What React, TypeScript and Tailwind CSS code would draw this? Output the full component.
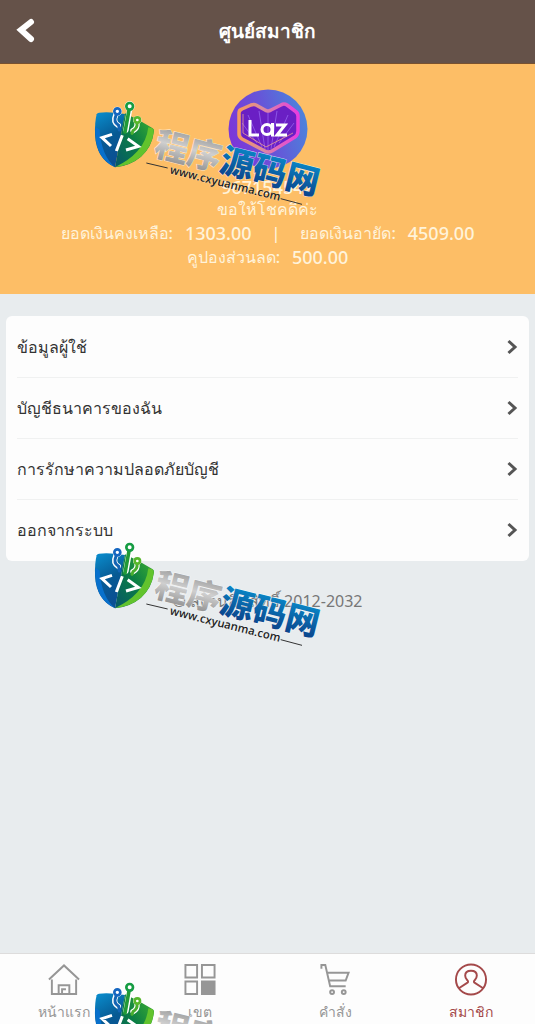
import { useId } from "react";

const menu = ["ข้อมูลผู้ใช้", "บัญชีธนาคารของฉัน", "การรักษาความปลอดภัยบัญชี", "ออกจากระบบ"];

function Chevron() {
  return (
    <svg viewBox="0 0 12 16" className="h-4 w-3" fill="none" stroke="#555" strokeWidth="3" aria-hidden="true">
      <path d="M2.500 2 9 8l-6.500 6" />
    </svg>
  );
}

function Avatar() {
  return (
    <svg viewBox="0 0 80 80" className="h-20 w-20" role="img" aria-label="Laz">
      <defs>
        <linearGradient id="disc" x1="0" y1="0.600" x2="1" y2="0.300">
          <stop offset="0" stopColor="#7d35d8" />
          <stop offset="0.500" stopColor="#6656d8" />
          <stop offset="1" stopColor="#4a86dc" />
        </linearGradient>
        <linearGradient id="heart" x1="0" y1="0" x2="1" y2="0">
          <stop offset="0" stopColor="#f79a5c" />
          <stop offset="0.400" stopColor="#d98aa0" />
          <stop offset="1" stopColor="#e93ce0" />
        </linearGradient>
      </defs>
      <circle cx="40" cy="40" r="39.500" fill="url(#disc)" />
      <path d="M12 19 27 15l13 7 16-7 14 10v22L40 62 14 50Z" fill="#6a1fc4" />
      <path d="M40 62V22M34 58 20 26M46 58l14-32M29 54 14 34M51 54l15-20M37 60l-6-38M43 60l6-38" stroke="#8d55e6" strokeWidth="1" />
      <path
        d="M11 24q0-3 3-4l9-4q3-1 5 0l9 5q3 2 6 0l10-5q3-2 6 0l8 6q3 2 3 5v15q0 4-3 6L44 62q-4 2-7 0L14 50q-3-2-3-5Z"
        fill="none"
        stroke="url(#heart)"
        strokeWidth="3.500"
        strokeLinejoin="round"
      />
      <path d="M15 25v19l23 14 27-14" fill="none" stroke="#ffb08a" strokeWidth="1" opacity="0.700" />
      <path d="M22 31v15h9" fill="none" stroke="#fff" strokeWidth="3" />
      <circle cx="39" cy="40.500" r="5" fill="none" stroke="#fff" strokeWidth="3" />
      <path d="M44.500 34v13.500M48 36h9l-8 10h10" fill="none" stroke="#fff" strokeWidth="3" />
    </svg>
  );
}

function Watermark({ place }: { place: string }) {
  const id = useId();
  return (
    <svg viewBox="0 0 750 390" className={"pointer-events-none absolute left-[85px] w-[250px] " + place} aria-hidden="true">
      <defs>
        <linearGradient id={id + "b"} x1="0" y1="0" x2="0.300" y2="1">
          <stop offset="0" stopColor="#0a8fd0" />
          <stop offset="0.550" stopColor="#075a93" />
          <stop offset="1" stopColor="#0a4f94" />
        </linearGradient>
        <linearGradient id={id + "g"} x1="1" y1="0" x2="0" y2="1">
          <stop offset="0" stopColor="#43b52c" />
          <stop offset="0.500" stopColor="#0b7d45" />
          <stop offset="1" stopColor="#06566a" />
        </linearGradient>
        <linearGradient id={id + "s"} x1="0" y1="0" x2="0" y2="1">
          <stop offset="0" stopColor="#858585" />
          <stop offset="0.500" stopColor="#cfcfcf" />
          <stop offset="1" stopColor="#808080" />
        </linearGradient>
        <linearGradient id={id + "t"} x1="0" y1="0" x2="0" y2="1">
          <stop offset="0.200" stopColor="#0a86c6" />
          <stop offset="0.900" stopColor="#0b4088" />
        </linearGradient>
      </defs>
      <path d="M42 98q30-4 78 4L90 262Q34 236 30 165q-1-40 5-62 2-4 7-5Z" fill={"url(#" + id + "b)"} />
      <path d="M120 100q46 22 82 44 6 3 5 10-6 48-39 76-32 27-78 32Z" fill={"url(#" + id + "g)"} />
      <path d="M202 145q5 4 4 12-7 47-39 74-31 26-76 30 42-20 66-47 28-30 33-72Z" fill="#62c32d" />
      <path d="M31 140q-5 94 59 121-41-34-46-112Z" fill="#0870cc" />
      <g fill="none" strokeLinecap="round">
        <g stroke="#fff" strokeWidth="16">
          <path d="M134 88 123 150M92 106q-9 20 8 30M156 130q2 14-12 22" />
          <circle cx="134" cy="79" r="9" strokeWidth="12" />
          <circle cx="97" cy="94" r="8" strokeWidth="12" />
          <circle cx="157" cy="120" r="7" strokeWidth="12" />
        </g>
        <path d="M132 90 120 156" stroke="#219a36" strokeWidth="11" />
        <path d="M93 106q-9 20 8 30l2 14" stroke="#1465b4" strokeWidth="9" />
        <path d="M156 130q2 14-12 22l-3 8" stroke="#48ae2d" strokeWidth="9" />
        <circle cx="134" cy="79" r="10" fill="#fff" stroke="#169c43" strokeWidth="8" />
        <circle cx="97" cy="94" r="9" fill="#fff" stroke="#1566c0" strokeWidth="8" />
        <circle cx="157" cy="120" r="8" fill="#fff" stroke="#57b62b" strokeWidth="8" />
      </g>
      <path d="m81 163-30 10 27 25M112 166 94 213M128 176l32 23-37 11" fill="none" stroke="#fff" strokeWidth="9" />
      <g transform="translate(203 224) rotate(14)">
        <text
          fontFamily="Noto Sans CJK SC, sans-serif"
          fontSize="101"
          fontWeight="900"
          stroke="#ffffffb0"
          strokeWidth="3"
          paintOrder="stroke"
        >
          <tspan fill={"url(#" + id + "s)"}>程序</tspan>
          <tspan fill={"url(#" + id + "t)"}>源码网</tspan>
        </text>
      </g>
      <g transform="translate(253 280) rotate(14)">
        <text fontFamily="Open Sans, sans-serif" fontSize="34" fontWeight="600" fill="#222" stroke="#ffffff80" strokeWidth="2" paintOrder="stroke">
          www.cxyuanma.com
        </text>
      </g>
      <path d="m184 249 64 15M587 356l64 17" stroke="#333" strokeWidth="3" />
    </svg>
  );
}

function HomeIcon() {
  return (
    <svg viewBox="0 0 34 34" className="h-[34px] w-[34px]" fill="none" stroke="currentColor" strokeWidth="2" aria-hidden="true">
      <path d="M1.500 17 17 2.500 32.500 17M4.500 17v15h25V17M11.500 31v-8h11v8M15 31v-4h4" />
    </svg>
  );
}

function GridIcon() {
  return (
    <svg viewBox="0 0 34 34" className="h-[34px] w-[34px]" fill="none" stroke="currentColor" strokeWidth="2" aria-hidden="true">
      <path d="M2 2h12v13H2zM19 2h13v13H19zM2 19h12v13H2z" />
      <path d="M19 19h13v13H19z" fill="currentColor" />
    </svg>
  );
}

function CartIcon() {
  return (
    <svg viewBox="0 0 34 34" className="h-[34px] w-[34px]" fill="none" stroke="currentColor" strokeWidth="2" aria-hidden="true">
      <path d="M3 6V2h4l5 22h16M8 10h23l-3 8H10" />
      <circle cx="14" cy="30" r="2" />
      <circle cx="26" cy="30" r="2" />
    </svg>
  );
}

function MemberIcon() {
  return (
    <svg viewBox="0 0 34 34" className="h-[34px] w-[34px]" fill="none" stroke="currentColor" strokeWidth="2" aria-hidden="true">
      <circle cx="17" cy="17" r="15.500" />
      <path d="M4.500 26 13 20.500q2-1 0-3-2-2-2-4.500 0-5 6-5t6 5q0 2.500-2 4.500-2 2 0 3l8.500 5.500" />
    </svg>
  );
}

const tabs = [
  { label: "หน้าแรก", icon: <HomeIcon />, tone: "text-[#969696]" },
  { label: "เขต", icon: <GridIcon />, tone: "text-[#969696]" },
  { label: "คำสั่ง", icon: <CartIcon />, tone: "text-[#969696]" },
  { label: "สมาชิก", icon: <MemberIcon />, tone: "text-[#a4494a]" },
];

export default function App() {
  return (
    <div className="relative flex min-h-screen flex-col overflow-hidden bg-[#e8ecee] font-['Noto_Sans',sans-serif]">
      <header className="grid h-16 grid-cols-[1fr_auto_1fr] items-center border-b border-[#79522f] bg-[#655249] px-4 text-white">
        <button type="button" aria-label="ย้อนกลับ" className="justify-self-start">
          <svg viewBox="0 0 22 28" className="h-7 w-[22px]" fill="none" stroke="currentColor" strokeWidth="6" strokeLinecap="round" aria-hidden="true">
            <path d="M15 4 5 12l10 9" />
          </svg>
        </button>
        <h1 className="text-[19px] font-semibold">ศูนย์สมาชิก</h1>
      </header>

      <section className="flex flex-col items-center bg-[#fdbe66] py-[25px] text-base leading-6 font-medium text-[#fff3da]">
        <Avatar />
        <p className="mt-2 text-lg leading-5">967154542</p>
        <p className="leading-6">ขอให้โชคดีค่ะ</p>
        <div className="flex items-center gap-5">
          <p className="flex gap-3">
            ยอดเงินคงเหลือ: <span className="text-lg leading-6">1303.00</span>
          </p>
          <span>|</span>
          <p className="flex gap-3">
            ยอดเงินอายัด: <span className="text-lg leading-6">4509.00</span>
          </p>
        </div>
        <p className="flex gap-3">
          คูปองส่วนลด: <span className="text-lg leading-6">500.00</span>
        </p>
      </section>

      <main className="flex flex-col">
        <ul className="mx-[6px] mt-[22px] rounded-md bg-[#fdfdfd] px-[11px] py-px">
          {menu.map((label) => (
            <li key={label} className="border-b border-[#f0f1f1] last:border-b-0">
              <a href="#" className="flex h-[60px] items-center justify-between text-base font-medium text-[#333]">
                {label}
                <Chevron />
              </a>
            </li>
          ))}
        </ul>
        <p className="mt-7 text-center text-base text-[#777]">© สงวนลิขสิทธิ์ 2012-2032</p>
      </main>

      <nav className="mt-auto border-t border-[#dddcdc] bg-[#fdfdfd]">
        <ul className="-mx-1 grid grid-cols-4">
          {tabs.map((tab) => (
            <li key={tab.label}>
              <a href="#" className={"flex h-[70px] flex-col items-center gap-1 pt-[9px] text-sm leading-6 font-medium " + tab.tone}>
                {tab.icon}
                {tab.label}
              </a>
            </li>
          ))}
        </ul>
      </nav>

      <Watermark place="top-20" />
      <Watermark place="top-[521px]" />
      <Watermark place="top-[961px]" />
    </div>
  );
}
